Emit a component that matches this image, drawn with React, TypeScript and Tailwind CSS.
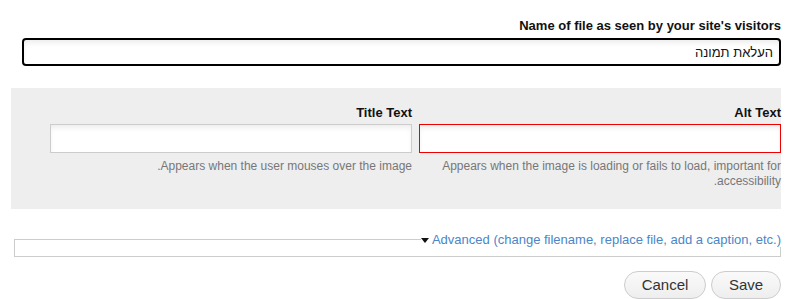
import React from "react";

const inputShadow = "shadow-[inset_0_4px_6px_-2px_rgba(0,0,0,0.09)]";

export default function App() {
  return (
    <div
      dir="rtl"
      className="w-[786px] h-[299px] bg-white text-[#111] overflow-hidden"
      style={{ fontFamily: '"Liberation Sans", Arial, sans-serif' }}
    >
      <div className="pr-[5px] pl-[22px] pt-[19px]">
        <label className="block text-[13px] font-bold leading-[14px] mb-[5px]">
          Name of file as seen by your site's visitors
        </label>
        <input
          defaultValue="העלאת תמונה"
          className={`block w-full h-[28px] border-2 border-black rounded-[4px] bg-white px-[6px] text-[13px] outline-none ${inputShadow}`}
        />
      </div>

      <div className="ml-[11px] mr-[5px] mt-[22px] h-[121px] bg-[#eeeeee] pl-[39px] pt-[18px]">
        <div className="grid grid-cols-2 gap-x-[7px]">
          <div>
            <label className="block text-[13px] font-bold leading-[14px] mb-[4px]">Alt Text</label>
            <input
              className={`block w-full h-[29px] border border-[#ee0000] bg-white outline-none ${inputShadow}`}
            />
            <p className="mt-[6px] text-[12px] leading-[15px] text-[#777]">
              Appears when the image is loading or fails to load, important for accessibility.
            </p>
          </div>
          <div>
            <label className="block text-[13px] font-bold leading-[14px] mb-[4px]">Title Text</label>
            <input
              className={`block w-full h-[29px] border border-[#cccccc] bg-white outline-none ${inputShadow}`}
            />
            <p className="mt-[6px] text-[12px] leading-[15px] text-[#777]">
              Appears when the user mouses over the image.
            </p>
          </div>
        </div>
      </div>

      <fieldset className="ml-[14px] mr-[5px] mt-[23px] h-[25px] border border-[#cccccc] p-0">
        <legend className="mr-[-1px] px-0 text-[13px] leading-[15px] text-[#4a86c8] flex items-center">
          <span className="flex items-center gap-[3px]">
            <span>Advanced (change filename, replace file, add a caption, etc.)</span>
            <svg width="8" height="5" viewBox="0 0 8 5" className="mt-[2px]">
              <path d="M0 0 L8 0 L4 5 Z" fill="#111" />
            </svg>
          </span>
        </legend>
      </fieldset>

      <div className="mr-[5px] mt-[14px] flex gap-[5px]">
        <button className="h-[28px] w-[70px] rounded-full border border-[#cccccc] bg-gradient-to-b from-[#fafafa] to-[#eeeeee] text-[15px] text-[#333]">
          Save
        </button>
        <button className="h-[28px] w-[82px] rounded-full border border-[#cccccc] bg-gradient-to-b from-[#fafafa] to-[#eeeeee] text-[15px] text-[#333]">
          Cancel
        </button>
      </div>
    </div>
  );
}
